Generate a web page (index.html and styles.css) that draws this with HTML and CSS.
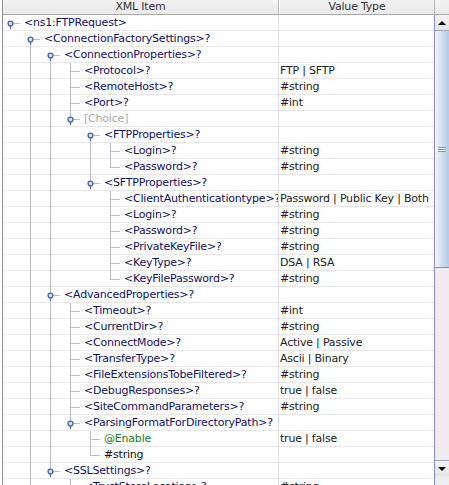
FILE: index.html
```html
<!DOCTYPE html>
<html>
<head>
<meta charset="utf-8">
<link rel="stylesheet" href="styles.css">
</head>
<body>
<div class="frame">
  <div class="main">
    <div class="head">
      <div class="hc hc1">XML Item</div>
      <div class="hc hc2">Value Type</div>
    </div>
    <div class="rows">
      <div class="row"><div class="tree"><i class="g hr"><svg class="hdl" width="20" height="16" viewBox="0 0 20 16"><circle cx="7.5" cy="8.5" r="2.4"/><rect x="6.9" y="10.8" width="1.3" height="3.4"/></svg></i><span class="name">&lt;ns1:FTPRequest&gt;</span></div><div class="val"></div></div>
      <div class="row"><div class="tree"><i class="g"></i><i class="g hs"><svg class="hdl" width="20" height="16" viewBox="0 0 20 16"><circle cx="7.5" cy="8.5" r="2.4"/><rect x="6.9" y="10.8" width="1.3" height="3.4"/></svg></i><span class="name">&lt;ConnectionFactorySettings&gt;?</span></div><div class="val"></div></div>
      <div class="row"><div class="tree"><i class="g"></i><i class="g pipe"></i><i class="g hs"><svg class="hdl" width="20" height="16" viewBox="0 0 20 16"><circle cx="7.5" cy="8.5" r="2.4"/><rect x="6.9" y="10.8" width="1.3" height="3.4"/></svg></i><span class="name">&lt;ConnectionProperties&gt;?</span></div><div class="val"></div></div>
      <div class="row"><div class="tree"><i class="g"></i><i class="g pipe"></i><i class="g pipe"></i><i class="g tee"></i><span class="name">&lt;Protocol&gt;?</span></div><div class="val">FTP | SFTP</div></div>
      <div class="row"><div class="tree"><i class="g"></i><i class="g pipe"></i><i class="g pipe"></i><i class="g tee"></i><span class="name">&lt;RemoteHost&gt;?</span></div><div class="val">#string</div></div>
      <div class="row"><div class="tree"><i class="g"></i><i class="g pipe"></i><i class="g pipe"></i><i class="g tee"></i><span class="name">&lt;Port&gt;?</span></div><div class="val">#int</div></div>
      <div class="row"><div class="tree"><i class="g"></i><i class="g pipe"></i><i class="g pipe"></i><i class="g elbow"><svg class="hdl" width="20" height="16" viewBox="0 0 20 16"><circle cx="7.5" cy="8.5" r="2.4"/><rect x="6.9" y="10.8" width="1.3" height="3.4"/></svg></i><span class="name choice">[Choice]</span></div><div class="val"></div></div>
      <div class="row"><div class="tree"><i class="g"></i><i class="g pipe"></i><i class="g pipe"></i><i class="g"></i><i class="g hs"><svg class="hdl" width="20" height="16" viewBox="0 0 20 16"><circle cx="7.5" cy="8.5" r="2.4"/><rect x="6.9" y="10.8" width="1.3" height="3.4"/></svg></i><span class="name">&lt;FTPProperties&gt;?</span></div><div class="val"></div></div>
      <div class="row"><div class="tree"><i class="g"></i><i class="g pipe"></i><i class="g pipe"></i><i class="g"></i><i class="g pipe"></i><i class="g tee"></i><span class="name">&lt;Login&gt;?</span></div><div class="val">#string</div></div>
      <div class="row"><div class="tree"><i class="g"></i><i class="g pipe"></i><i class="g pipe"></i><i class="g"></i><i class="g pipe"></i><i class="g elbow"></i><span class="name">&lt;Password&gt;?</span></div><div class="val">#string</div></div>
      <div class="row"><div class="tree"><i class="g"></i><i class="g pipe"></i><i class="g pipe"></i><i class="g"></i><i class="g elbow"><svg class="hdl" width="20" height="16" viewBox="0 0 20 16"><circle cx="7.5" cy="8.5" r="2.4"/><rect x="6.9" y="10.8" width="1.3" height="3.4"/></svg></i><span class="name">&lt;SFTPProperties&gt;?</span></div><div class="val"></div></div>
      <div class="row"><div class="tree"><i class="g"></i><i class="g pipe"></i><i class="g pipe"></i><i class="g"></i><i class="g"></i><i class="g tee"></i><span class="name">&lt;ClientAuthenticationtype&gt;?</span></div><div class="val">Password | Public Key | Both</div></div>
      <div class="row"><div class="tree"><i class="g"></i><i class="g pipe"></i><i class="g pipe"></i><i class="g"></i><i class="g"></i><i class="g tee"></i><span class="name">&lt;Login&gt;?</span></div><div class="val">#string</div></div>
      <div class="row"><div class="tree"><i class="g"></i><i class="g pipe"></i><i class="g pipe"></i><i class="g"></i><i class="g"></i><i class="g tee"></i><span class="name">&lt;Password&gt;?</span></div><div class="val">#string</div></div>
      <div class="row"><div class="tree"><i class="g"></i><i class="g pipe"></i><i class="g pipe"></i><i class="g"></i><i class="g"></i><i class="g tee"></i><span class="name">&lt;PrivateKeyFile&gt;?</span></div><div class="val">#string</div></div>
      <div class="row"><div class="tree"><i class="g"></i><i class="g pipe"></i><i class="g pipe"></i><i class="g"></i><i class="g"></i><i class="g tee"></i><span class="name">&lt;KeyType&gt;?</span></div><div class="val">DSA | RSA</div></div>
      <div class="row"><div class="tree"><i class="g"></i><i class="g pipe"></i><i class="g pipe"></i><i class="g"></i><i class="g"></i><i class="g elbow"></i><span class="name">&lt;KeyFilePassword&gt;?</span></div><div class="val">#string</div></div>
      <div class="row"><div class="tree"><i class="g"></i><i class="g pipe"></i><i class="g tee"><svg class="hdl" width="20" height="16" viewBox="0 0 20 16"><circle cx="7.5" cy="8.5" r="2.4"/><rect x="6.9" y="10.8" width="1.3" height="3.4"/></svg></i><span class="name">&lt;AdvancedProperties&gt;?</span></div><div class="val"></div></div>
      <div class="row"><div class="tree"><i class="g"></i><i class="g pipe"></i><i class="g pipe"></i><i class="g tee"></i><span class="name">&lt;Timeout&gt;?</span></div><div class="val">#int</div></div>
      <div class="row"><div class="tree"><i class="g"></i><i class="g pipe"></i><i class="g pipe"></i><i class="g tee"></i><span class="name">&lt;CurrentDir&gt;?</span></div><div class="val">#string</div></div>
      <div class="row"><div class="tree"><i class="g"></i><i class="g pipe"></i><i class="g pipe"></i><i class="g tee"></i><span class="name">&lt;ConnectMode&gt;?</span></div><div class="val">Active | Passive</div></div>
      <div class="row"><div class="tree"><i class="g"></i><i class="g pipe"></i><i class="g pipe"></i><i class="g tee"></i><span class="name">&lt;TransferType&gt;?</span></div><div class="val">Ascii | Binary</div></div>
      <div class="row"><div class="tree"><i class="g"></i><i class="g pipe"></i><i class="g pipe"></i><i class="g tee"></i><span class="name">&lt;FileExtensionsTobeFiltered&gt;?</span></div><div class="val">#string</div></div>
      <div class="row"><div class="tree"><i class="g"></i><i class="g pipe"></i><i class="g pipe"></i><i class="g tee"></i><span class="name">&lt;DebugResponses&gt;?</span></div><div class="val">true | false</div></div>
      <div class="row"><div class="tree"><i class="g"></i><i class="g pipe"></i><i class="g pipe"></i><i class="g tee"></i><span class="name">&lt;SiteCommandParameters&gt;?</span></div><div class="val">#string</div></div>
      <div class="row"><div class="tree"><i class="g"></i><i class="g pipe"></i><i class="g pipe"></i><i class="g elbow"><svg class="hdl" width="20" height="16" viewBox="0 0 20 16"><circle cx="7.5" cy="8.5" r="2.4"/><rect x="6.9" y="10.8" width="1.3" height="3.4"/></svg></i><span class="name">&lt;ParsingFormatForDirectoryPath&gt;?</span></div><div class="val"></div></div>
      <div class="row"><div class="tree"><i class="g"></i><i class="g pipe"></i><i class="g pipe"></i><i class="g"></i><i class="g tee"></i><span class="name attr">@Enable</span></div><div class="val">true | false</div></div>
      <div class="row"><div class="tree"><i class="g"></i><i class="g pipe"></i><i class="g pipe"></i><i class="g"></i><i class="g elbow"></i><span class="name txt">#string</span></div><div class="val"></div></div>
      <div class="row"><div class="tree"><i class="g"></i><i class="g pipe"></i><i class="g elbow"><svg class="hdl" width="20" height="16" viewBox="0 0 20 16"><circle cx="7.5" cy="8.5" r="2.4"/><rect x="6.9" y="10.8" width="1.3" height="3.4"/></svg></i><span class="name">&lt;SSLSettings&gt;?</span></div><div class="val"></div></div>
      <div class="row"><div class="tree"><i class="g"></i><i class="g pipe"></i><i class="g"></i><i class="g tee"></i><span class="name">&lt;TrustStoreLocation&gt;?</span></div><div class="val">#string</div></div>
    </div>
  </div>
  <div class="vs">
    <div class="corner"></div>
    <div class="bar">
      <div class="btn"><span class="tri up"></span></div>
      <div class="thumb"><span class="grip"></span></div>
      <div class="track"></div>
      <div class="btn btn-down"><span class="tri down"></span></div>
      <div class="filler"></div>
    </div>
  </div>
</div>
</body>
</html>
```

FILE: styles.css
```css
html, body {
  margin: 0;
  padding: 0;
  background: #ffffff;
}
body {
  font-family: "DejaVu Sans", "Liberation Sans", sans-serif;
  font-size: 11px;
  letter-spacing: -0.2px;
  overflow: hidden;
}
.frame {
  --l: #b3bfd6;
  display: flex;
  height: 485px;
  margin-left: 2px;
  border-left: 1px solid #8e8e8e;
  overflow: hidden;
}
.main {
  width: 431px;
  flex: none;
  display: flex;
  flex-direction: column;
  overflow: hidden;
}
.head {
  display: flex;
  height: 15px;
  flex: none;
  box-sizing: border-box;
  background: linear-gradient(#f2f2f2, #e9e9e9);
  border-bottom: 1px solid #a8a8a8;
}
.hc {
  line-height: 14px;
  text-align: center;
  color: #333333;
  white-space: nowrap;
  overflow: hidden;
}
.hc1 {
  width: 276px;
  box-sizing: border-box;
  border-right: 1px solid #b9b9b9;
}
.hc2 {
  flex: 1;
  border-left: 1px solid #ffffff;
}
.rows {
  display: flex;
  flex-direction: column;
}
.row {
  display: flex;
  height: 16px;
  flex: none;
  background: linear-gradient(to top, #e7e7e7 1px, transparent 1px);
}
.tree {
  width: 276px;
  flex: none;
  box-sizing: border-box;
  border-right: 1px solid #dcdcdc;
  display: flex;
  overflow: hidden;
  white-space: nowrap;
}
.g {
  flex: none;
  display: block;
  width: 20px;
  height: 16px;
}
.pipe {
  background: linear-gradient(var(--l), var(--l)) 7px 0 / 1px 16px no-repeat;
}
.tee {
  background:
    linear-gradient(var(--l), var(--l)) 7px 0 / 1px 16px no-repeat,
    linear-gradient(var(--l), var(--l)) 7px 8px / 10px 1px no-repeat;
}
.elbow {
  background:
    linear-gradient(var(--l), var(--l)) 7px 0 / 1px 9px no-repeat,
    linear-gradient(var(--l), var(--l)) 7px 8px / 10px 1px no-repeat;
}
.hs {
  background:
    linear-gradient(var(--l), var(--l)) 7px 8px / 1px 8px no-repeat,
    linear-gradient(var(--l), var(--l)) 7px 8px / 10px 1px no-repeat;
}
.hr {
  background: linear-gradient(var(--l), var(--l)) 7px 8px / 10px 1px no-repeat;
}
.hdl {
  display: block;
}
.hdl circle {
  fill: #d9e2f2;
  stroke: #4c66a0;
  stroke-width: 1.4;
}
.hdl rect {
  fill: #5a72a8;
}
.name {
  padding-left: 1px;
  line-height: 16px;
  color: #10105e;
}
.name.choice {
  color: #a9a9a9;
}
.name.attr {
  color: #1f7a1f;
}
.name.txt {
  color: #111111;
}
.val {
  flex: 1;
  padding-left: 1px;
  line-height: 16px;
  color: #222222;
  white-space: nowrap;
  overflow: hidden;
}
.vs {
  width: 15px;
  flex: none;
  display: flex;
  flex-direction: column;
}
.corner {
  height: 15px;
  flex: none;
  box-sizing: border-box;
  background: linear-gradient(#f2f2f2, #e9e9e9);
  border-bottom: 1px solid #a8a8a8;
  border-left: 1px solid #b9b9b9;
}
.bar {
  flex: 1;
  display: flex;
  flex-direction: column;
  border-left: 1px solid #8193b9;
  background: #efebef;
}
.btn {
  height: 16px;
  flex: none;
  box-sizing: border-box;
  background: linear-gradient(#f4f4f4, #e4e4e4);
  border-bottom: 1px solid #9aa6c2;
  display: flex;
  align-items: center;
  justify-content: center;
}
.btn-down {
  border-bottom: none;
  border-top: 1px solid #9aa6c2;
}
.tri {
  width: 0;
  height: 0;
  border-left: 4px solid transparent;
  border-right: 4px solid transparent;
}
.tri.up {
  border-bottom: 4px solid #000000;
}
.tri.down {
  border-top: 4px solid #000000;
}
.thumb {
  height: 237px;
  flex: none;
  box-sizing: border-box;
  background: linear-gradient(to right, #f4f8fd, #d3e1f3 45%, #b4cae7);
  border-bottom: 1px solid #7e91ba;
  display: flex;
  align-items: center;
  justify-content: center;
}
.grip {
  width: 8px;
  height: 5px;
  background: repeating-linear-gradient(#8397c2 0 1px, #eef3fb 1px 2px);
}
.track {
  flex: 1;
}
.filler {
  height: 9px;
  flex: none;
  background: #eeeeee;
}
```
